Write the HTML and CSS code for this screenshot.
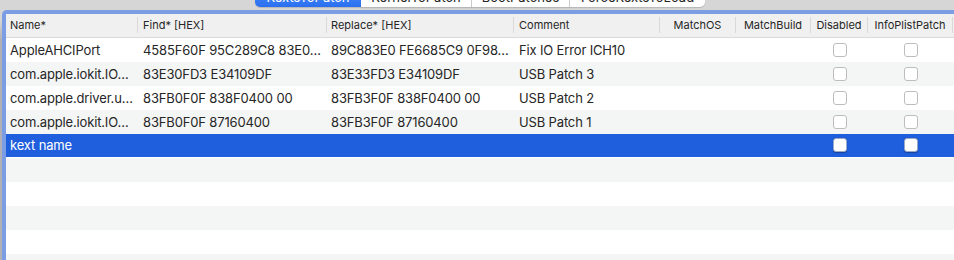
FILE: index.html
```html
<!DOCTYPE html>
<html lang="en">

<head>
  <meta charset="UTF-8">
  <meta name="viewport" content="width=device-width, initial-scale=1.0">
  <title>KextsToPatch</title>
  <link rel="stylesheet" href="styles.css">
</head>

<body>
  <div class="tabs">
    <div class="tab active">KextsToPatch</div>
    <div class="tab">KernelToPatch</div>
    <div class="tab">BootPatches</div>
    <div class="tab">ForceKextsToLoad</div>
  </div>
  <div class="window">
    <div class="frame">
      <div class="table">
        <div class="row head">
          <div class="cell">Name*</div>
          <div class="cell">Find* [HEX]</div>
          <div class="cell">Replace* [HEX]</div>
          <div class="cell">Comment</div>
          <div class="cell mid">MatchOS</div>
          <div class="cell mid">MatchBuild</div>
          <div class="cell mid">Disabled</div>
          <div class="cell mid">InfoPlistPatch</div>
          <div class="cell"></div>
        </div>
        <div class="row">
          <div class="cell">AppleAHCIPort</div>
          <div class="cell">4585F60F 95C289C8 83E0…</div>
          <div class="cell">89C883E0 FE6685C9 0F98…</div>
          <div class="cell">Fix IO Error ICH10</div>
          <div class="cell"></div>
          <div class="cell"></div>
          <div class="cell mid"><span class="check"></span></div>
          <div class="cell mid"><span class="check"></span></div>
          <div class="cell"></div>
        </div>
        <div class="row">
          <div class="cell">com.apple.iokit.IO…</div>
          <div class="cell">83E30FD3 E34109DF</div>
          <div class="cell">83E33FD3 E34109DF</div>
          <div class="cell">USB Patch 3</div>
          <div class="cell"></div>
          <div class="cell"></div>
          <div class="cell mid"><span class="check"></span></div>
          <div class="cell mid"><span class="check"></span></div>
          <div class="cell"></div>
        </div>
        <div class="row">
          <div class="cell">com.apple.driver.u…</div>
          <div class="cell">83FB0F0F 838F0400 00</div>
          <div class="cell">83FB3F0F 838F0400 00</div>
          <div class="cell">USB Patch 2</div>
          <div class="cell"></div>
          <div class="cell"></div>
          <div class="cell mid"><span class="check"></span></div>
          <div class="cell mid"><span class="check"></span></div>
          <div class="cell"></div>
        </div>
        <div class="row">
          <div class="cell">com.apple.iokit.IO…</div>
          <div class="cell">83FB0F0F 87160400</div>
          <div class="cell">83FB3F0F 87160400</div>
          <div class="cell">USB Patch 1</div>
          <div class="cell"></div>
          <div class="cell"></div>
          <div class="cell mid"><span class="check"></span></div>
          <div class="cell mid"><span class="check"></span></div>
          <div class="cell"></div>
        </div>
        <div class="row selected">
          <div class="cell">kext name</div>
          <div class="cell"></div>
          <div class="cell"></div>
          <div class="cell"></div>
          <div class="cell"></div>
          <div class="cell"></div>
          <div class="cell mid"><span class="check"></span></div>
          <div class="cell mid"><span class="check"></span></div>
          <div class="cell"></div>
        </div>
        <div class="row empty"></div>
        <div class="row empty"></div>
        <div class="row empty"></div>
        <div class="row empty"></div>
        <div class="row empty"></div>
      </div>
    </div>
  </div>
</body>

</html>
```

FILE: styles.css
```css
* {
  box-sizing: border-box;
}

body {
  margin: 0;
  background: #d6d6d6;
  font-family: Inter, "Noto Sans", sans-serif;
  color: #262626;
  height: 260px;
  overflow: hidden;
}

/* segmented control, mostly cut off at the top */
.tabs {
  display: flex;
  margin: -13px 0 0 255px;
  height: 20px;
}

.tab {
  height: 20px;
  line-height: 20px;
  font-size: 13px;
  text-align: center;
  background: #fff;
  color: #262626;
  border-right: 1px solid #cfcfcf;
  box-shadow: 0 1px 1px rgba(0, 0, 0, .15);
}

.tab:nth-child(1) { width: 106px; }
.tab:nth-child(2) { width: 111px; }
.tab:nth-child(3) { width: 98px; }
.tab:nth-child(4) { width: 135px; border-right: 0; border-radius: 0 0 5px 0; }

.tab.active {
  background: linear-gradient(#4a8ef8, #2a6ff0);
  color: #fff;
  border-right: 0;
  border-radius: 0 0 0 5px;
}

.window {
  margin-top: 3px;
  padding-left: 2px;
  background: linear-gradient(#d6d6d6 10px, #b0b0b6 30px);
}

.frame {
  border-top: 4px solid #7b9de4;
  border-left: 4px solid #7b9de4;
  border-top-left-radius: 5px;
  background: #fff;
  height: 260px;
}

.row {
  display: grid;
  grid-template-columns: 132px 189px 187px 146px 76px 75px 57px 85px 1fr;
  height: 24px;
  font-size: 13px;
  line-height: 24px;
  letter-spacing: -0.15px;
}

.row:nth-child(odd) {
  background: #f4f5f5;
}

.row.head {
  background: #f0f0f0;
  border-bottom: 1px solid #dadada;
  font-size: 11px;
  line-height: 23px;
  letter-spacing: 0;
}

.head .cell {
  border-right: 1px solid #d9d9d9;
  height: 16px;
  line-height: 16px;
  margin-top: 3px;
}

.cell {
  padding: 0 4px;
  white-space: nowrap;
  overflow: hidden;
}

.cell:nth-child(2),
.cell:nth-child(4) {
  padding-left: 5px;
}

.cell.mid {
  text-align: center;
  padding: 0;
}

.row.selected {
  background: #1f5fdd;
  color: #fff;
  border-bottom: 1px solid #fff;
  line-height: 23px;
}

.check {
  display: inline-block;
  width: 14px;
  height: 14px;
  border: 1px solid #bdbdbd;
  border-radius: 3px;
  background: #fff;
  vertical-align: middle;
  margin-top: -2px;
}

.selected .check {
  border-color: #9aa9c8;
  box-shadow: 0 0.5px 1px rgba(0, 0, 0, .3);
}
```
